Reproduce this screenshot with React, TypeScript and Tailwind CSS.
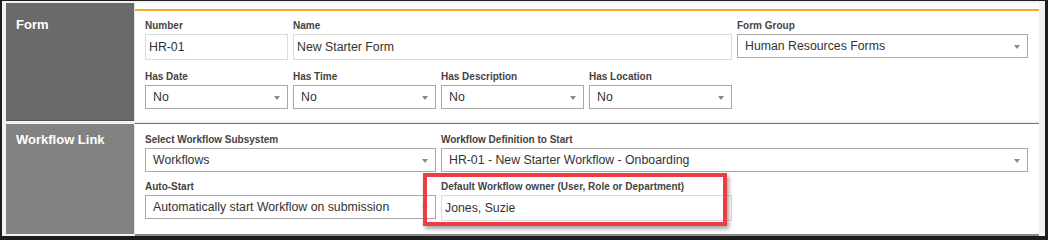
import React from 'react'

type fieldType = { label: string, value: string, kind: 'input' | 'select', span?: string }

const formFields: fieldType[] = [
  { label: 'Number', value: 'HR-01', kind: 'input' },
  { label: 'Name', value: 'New Starter Form', kind: 'input', span: 'col-span-3' },
  { label: 'Form Group', value: 'Human Resources Forms', kind: 'select', span: 'col-span-2' },
  { label: 'Has Date', value: 'No', kind: 'select' },
  { label: 'Has Time', value: 'No', kind: 'select' },
  { label: 'Has Description', value: 'No', kind: 'select' },
  { label: 'Has Location', value: 'No', kind: 'select' },
]

const workflowFields: fieldType[] = [
  { label: 'Select Workflow Subsystem', value: 'Workflows', kind: 'select', span: 'col-span-2' },
  { label: 'Workflow Definition to Start', value: 'HR-01 - New Starter Workflow - Onboarding', kind: 'select', span: 'col-span-4' },
  { label: 'Auto-Start', value: 'Automatically start Workflow on submission', kind: 'select', span: 'col-span-2' },
  { label: 'Default Workflow owner (User, Role or Department)', value: 'Jones, Suzie', kind: 'input', span: 'col-span-2' },
]

const Field = ({ field }: { field: fieldType }) => (
  <div className={field.span ?? ''}>
    <p className='h-[12px] leading-[12px] mb-[2px] text-[10px] font-bold text-[#444] whitespace-nowrap'>{field.label}</p>
    {field.kind === 'input' ? (
      <div className='h-[26px] border border-[#dcdcdc] bg-white pl-[3px] flex items-center text-[12.3px] text-[#333]'>
        {field.value}
      </div>
    ) : (
      <div className='relative h-[24px] border border-[#a8a8a8] bg-white pl-[7px] flex items-center text-[12.3px] text-[#333]'>
        {field.value}
        <span className='absolute right-[7px] top-[10px] w-0 h-0 border-l-[3px] border-r-[3px] border-t-[4px] border-l-transparent border-r-transparent border-t-[#8a8a8a]' />
      </div>
    )}
  </div>
)

const App = () => {
  return (
    <div className="w-[1048px] h-[240px] bg-[#1d1d1d] pl-[2px] pt-[1px] pr-[3px] pb-[4px] font-['Liberation_Sans',Arial,sans-serif]">
      <div className='relative h-full bg-[#f2f2f2] pl-[4px] pt-[2px] pr-[6px] flex flex-col gap-[2px]'>

        <div className='flex h-[118px]'>
          <div className='w-[128px] bg-[#6a6a6a] pl-[10px] pt-[14px] border-b border-[#555]'>
            <p className='text-[13px] leading-[15px] font-bold text-white'>Form</p>
          </div>
          <div className='w-[1px] bg-[#e4e4e4]' />
          <div className='flex-1 bg-white pt-[6px]'>
            <div className='border-t-2 border-[#f6ab2c] pl-[10px] pt-[9px] grid grid-cols-[repeat(6,143px)] gap-x-[5px] gap-y-[11px]'>
              { formFields.map((f, i) => <Field key={i} field={f} />) }
            </div>
          </div>
        </div>

        <div className='flex h-[113px]'>
          <div className='w-[128px] bg-[#828282] pl-[10px] pt-[8px] mt-[1px] mb-[2px]'>
            <p className='text-[13px] leading-[15px] font-bold text-white whitespace-nowrap'>Workflow Link</p>
          </div>
          <div className='w-[1px] bg-[#e4e4e4]' />
          <div className='flex-1 bg-white border-t border-[#6e6e6e] border-b-2 border-b-[#8a8a8a] pl-[10px] pt-[10px]'>
            <div className='grid grid-cols-[repeat(6,143px)] gap-x-[5px] gap-y-[9px]'>
              { workflowFields.map((f, i) => <Field key={i} field={f} />) }
            </div>
          </div>
        </div>

        <div className='absolute left-[421px] top-[172px] w-[304px] h-[53px] border-[4px] border-[#ef3b44] shadow-[2px_3px_4px_rgba(0,0,0,0.35)]' />
      </div>
    </div>
  )
}

export default App
